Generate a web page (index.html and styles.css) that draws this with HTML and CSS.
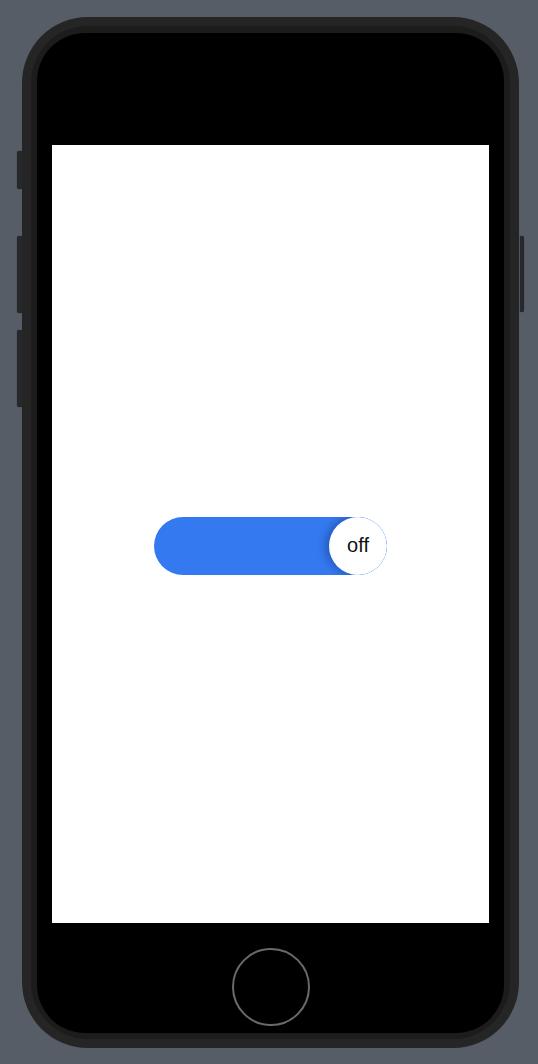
FILE: index.html
```html
<!DOCTYPE html>
<html>
<head>
<meta charset="utf-8">
<link rel="stylesheet" href="styles.css">
</head>
<body>
<div class="stage">
  <div class="rail rail-left">
    <div class="side-btn btn-mute"></div>
    <div class="side-btn btn-vol-up"></div>
    <div class="side-btn btn-vol-down"></div>
  </div>
  <div class="phone">
    <div class="bezel">
      <div class="face">
        <div class="screen">
          <div class="toggle">
            <div class="knob">off</div>
          </div>
        </div>
        <div class="home"></div>
      </div>
    </div>
  </div>
  <div class="rail rail-right">
    <div class="side-btn btn-power"></div>
  </div>
</div>
</body>
</html>
```
FILE: styles.css
```css
html, body {
  margin: 0;
  padding: 0;
}
body {
  background: #575d66;
  width: 538px;
  height: 1064px;
  overflow: hidden;
  font-family: "Liberation Sans", Arial, sans-serif;
}
.stage {
  display: flex;
  flex-direction: row;
  align-items: flex-start;
  padding-top: 17px;
  padding-left: 17px;
}
.rail {
  display: flex;
  flex-direction: column;
}
.rail-left {
  width: 5px;
}
.rail-right {
  width: 4px;
  margin-left: 1px;
}
.side-btn {
  background: #26282b;
  box-shadow: 0 0 1px rgba(20, 20, 20, 0.8);
}
.rail-left .side-btn {
  width: 5px;
  border-radius: 2px 0 0 2px;
}
.btn-mute {
  margin-top: 134px;
  height: 38px;
}
.btn-vol-up {
  margin-top: 47px;
  height: 77px;
}
.btn-vol-down {
  margin-top: 17px;
  height: 77px;
}
.btn-power {
  margin-top: 219px;
  height: 76px;
  border-radius: 0 2px 2px 0;
}
.phone {
  width: 497px;
  height: 1031px;
  box-sizing: border-box;
  background: #252525;
  border-radius: 66px;
  padding: 9px;
}
.bezel {
  height: 100%;
  box-sizing: border-box;
  background: #1c1c1c;
  border-radius: 57px;
  padding: 7px 6px 6px 6px;
}
.face {
  height: 100%;
  background: #000;
  border-radius: 48px;
  display: flex;
  flex-direction: column;
  align-items: center;
  padding-top: 112px;
  box-sizing: border-box;
}
.screen {
  width: 437px;
  height: 778px;
  background: #fff;
  display: flex;
  align-items: center;
  justify-content: center;
  padding-top: 23px;
  box-sizing: border-box;
}
.toggle {
  width: 233px;
  height: 58px;
  border-radius: 29px;
  background: #3479f0;
  overflow: hidden;
  display: flex;
  justify-content: flex-end;
}
.knob {
  width: 58px;
  height: 58px;
  border-radius: 50%;
  background: radial-gradient(circle, #ffffff 62%, #f4f5f7 100%);
  box-shadow: -3px 0 9px rgba(10, 30, 90, 0.4);
  display: flex;
  align-items: center;
  justify-content: center;
  font-size: 20px;
  color: #111;
}
.home {
  margin-top: 25px;
  width: 74px;
  height: 74px;
  border-radius: 50%;
  border: 2px solid #6a6a6a;
}
```
